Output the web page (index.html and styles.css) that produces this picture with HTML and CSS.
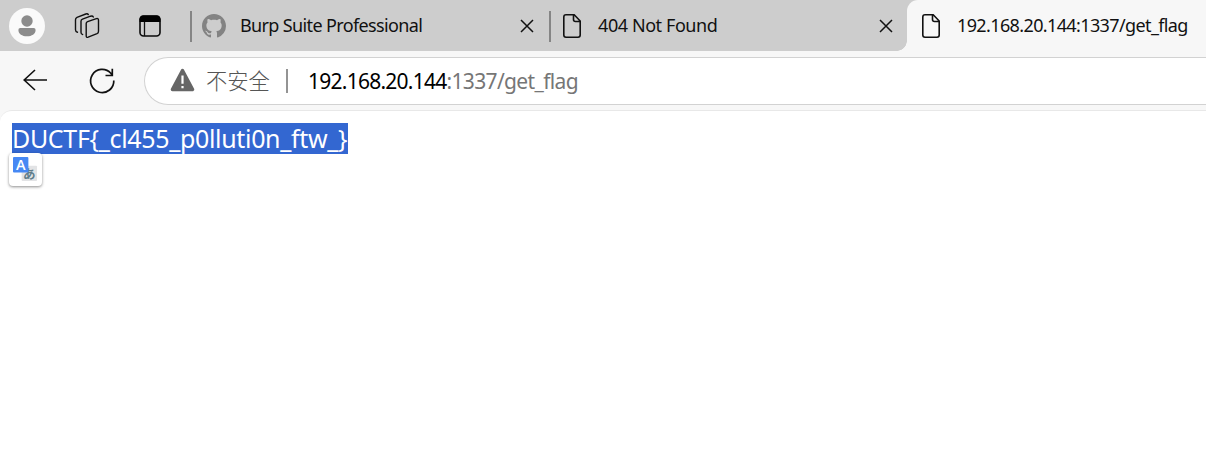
FILE: index.html
```html
<!DOCTYPE html>
<html lang="zh">
<head>
<meta charset="utf-8">
<title>192.168.20.144:1337/get_flag</title>
<link rel="stylesheet" href="styles.css">
</head>
<body>
<header class="tabstrip">
  <div class="tools">
    <svg class="avatar" viewBox="0 0 36 36"><circle cx="18" cy="18" r="18" fill="#fafafa"/><circle cx="18" cy="13" r="5.7" fill="#8c8c8c"/><path d="M11.3 20h13.4a1.9 1.9 0 0 1 1.9 1.9c0 4-3.8 6.3-8.6 6.3s-8.6-2.3-8.6-6.3A1.9 1.9 0 0 1 11.3 20z" fill="#8c8c8c"/></svg>
    <svg class="workspaces" viewBox="0 0 26 26" fill="none" stroke="#111" stroke-width="1.4" stroke-linecap="round" stroke-linejoin="round"><path d="M13.600 8.700L22.400 5.600Q24.500 5 24.500 7.200V18.200Q24.500 20 23 20.700L14.200 24.200Q12.200 24.900 12.200 22.800V10.600Q12.200 9.200 13.600 8.700z"/><path d="M8.600 21.500Q7 21.300 7 19.200V8.300Q7 6.700 8.500 6.100L16.500 3.200Q18.700 2.600 19.300 4"/><path d="M3.500 19.200Q1.500 18.700 1.500 16.700V6.700Q1.500 5 3 4.300L11.800 1Q13.700.4 14.300 1.600"/></svg>
    <svg class="vertical-tabs" viewBox="0 0 22 22"><rect x="1" y="1" width="20" height="20" rx="3.500" fill="none" stroke="#0a0a0a" stroke-width="1.600"/><path d="M.6 7V4.200Q.6.400 4.400.400h13.200q3.800 0 3.800 3.800V7z" fill="#000"/><path d="M5.500 7v14" stroke="#111" stroke-width="1.300"/></svg>
  </div>
  <div class="tab tab-first">
    <svg class="github" viewBox="0 0 16 16" fill="#838383"><path d="M8 0C3.580 0 0 3.580 0 8c0 3.540 2.290 6.530 5.470 7.590.4.070.55-.17.55-.38 0-.19-.010-.82-.010-1.490-2.010.37-2.530-.49-2.690-.94-.090-.23-.48-.94-.82-1.130-.28-.15-.68-.52-.010-.53.63-.010 1.080.58 1.230.82.72 1.210 1.870.87 2.330.66.070-.52.28-.87.51-1.070-1.780-.2-3.640-.89-3.640-3.950 0-.87.31-1.590.82-2.150-.080-.2-.36-1.020.080-2.120 0 0 .67-.21 2.200.82.64-.18 1.320-.27 2-.27s1.360.090 2 .27c1.530-1.040 2.200-.82 2.200-.82.44 1.100.16 1.920.080 2.120.51.56.82 1.270.82 2.150 0 3.070-1.870 3.750-3.650 3.950.29.25.54.73.54 1.480 0 1.070-.010 1.930-.010 2.200 0 .21.150.46.550.38A8.010 8.010 0 0 0 16 8c0-4.420-3.580-8-8-8z"/></svg>
    <span class="tab-title title-burp">Burp Suite Professional</span>
    <svg class="close" viewBox="0 0 14 14"><path d="M1 1l12 12M13 1L1 13"/></svg>
  </div>
  <div class="tab tab-second">
    <svg class="page-icon" viewBox="0 0 18 24"><path d="M3 .8h8.200L17.200 7v14q0 2.200-2.200 2.200H3Q.8 23.200.8 21V3Q.8.800 3 .8zM10.500.8V5.500q0 2 2 2h4.700"/></svg>
    <span class="tab-title title-missing">404 Not Found</span>
    <svg class="close" viewBox="0 0 14 14"><path d="M1 1l12 12M13 1L1 13"/></svg>
  </div>
  <div class="active-wrap">
    <div class="tab-active">
      <svg class="page-icon" viewBox="0 0 18 24"><path d="M3 .8h8.200L17.200 7v14q0 2.200-2.200 2.200H3Q.8 23.200.8 21V3Q.8.800 3 .8zM10.500.8V5.500q0 2 2 2h4.700"/></svg>
      <span class="tab-title title-flag">192.168.20.144:1337/get_flag</span>
    </div>
  </div>
</header>
<nav class="toolbar">
  <svg class="back" viewBox="0 0 25 22"><path d="M12 1L1.200 11 12 21M1.200 11H24"/></svg>
  <svg class="reload" viewBox="0 0 26 26"><path d="M24.800 12.500A11.600 11.600 0 1 1 21.800 5.200L23.200 7M23.300.8V7.500H16.500"/></svg>
  <div class="address">
    <svg class="warning" viewBox="0 0 25 24"><path d="M12.500 2.500L22.600 21.600H2.400z" fill="#666" stroke="#666" stroke-width="3.400" stroke-linejoin="round"/><path d="M12.500 7.500v8.300M12.500 18v2.200" stroke="#fff" stroke-width="2.200"/></svg>
    <span class="insecure">不安全</span>
    <span class="divider"></span>
    <span class="url"><span class="host">192.168.20.144</span><span class="path">:1337/get_flag</span></span>
  </div>
</nav>
<main class="content">
  <span class="flag">DUCTF{_cl455_p0lluti0n_ftw_}</span>
  <div class="translate">
    <svg viewBox="0 0 26 26"><rect x="9" y="9" width="16" height="16" rx="1" fill="#e2e3e5"/><text x="10.500" y="22.500" class="kana">あ</text><rect width="16" height="16" rx="1" fill="#4688f4"/><text x="8" y="13.300" class="latin">A</text></svg>
  </div>
</main>
</body>
</html>
```
FILE: styles.css
```css
* { box-sizing: border-box; }
body {
  margin: 0;
  height: 461px;
  overflow: hidden;
  background: #f7f7f7;
  font-family: "Noto Sans", "Open Sans", "Noto Sans CJK SC", sans-serif;
}
svg { display: block; flex: none; overflow: visible; }
.tabstrip { display: flex; height: 51px; background: #cdcdcd; }
.tools { display: flex; align-items: center; width: 190px; padding-left: 9px; }
.avatar { width: 36px; height: 36px; }
.workspaces { width: 26px; height: 26px; margin-left: 29px; }
.vertical-tabs { width: 22px; height: 22px; margin-left: 39px; }
.tab { display: flex; align-items: center; position: relative; }
.tab::before {
  content: "";
  position: absolute;
  left: 0;
  top: 11px;
  width: 2px;
  height: 31px;
  background: #858585;
}
.tab-first { width: 359px; padding: 0 15px 0 12px; }
.tab-second { width: 358px; padding: 0 14px 0 14px; }
.github { width: 24px; height: 24px; }
.page-icon { width: 18px; height: 24px; fill: none; stroke: #111; stroke-width: 1.600; }
.tab-title { padding-bottom: 2px; font-size: 18px; line-height: 24px; color: #111; white-space: nowrap; }
.title-burp { margin-left: 14px; letter-spacing: -0.63px; }
.title-missing { margin-left: 17px; letter-spacing: -0.42px; }
.title-flag { margin-left: 17px; letter-spacing: -0.62px; }
.close { width: 14px; height: 14px; margin-left: auto; fill: none; stroke: #111; stroke-width: 1.500; }
.active-wrap { flex: 1; background: linear-gradient(#cdcdcd 50%, #f7f7f7 50%); }
.tab-active {
  display: flex;
  align-items: center;
  height: 51px;
  padding-left: 15px;
  border-top-left-radius: 11px;
  background: #f7f7f7;
}
.tab-second::after {
  content: "";
  position: absolute;
  right: 0;
  bottom: 0;
  width: 10px;
  height: 10px;
  background: radial-gradient(circle at 0 0, #cdcdcd 9.500px, #f7f7f7 10px);
}
.toolbar { display: flex; align-items: center; height: 59px; background: #f7f7f7; }
.back { width: 25px; height: 22px; margin-left: 23px; margin-bottom: 1px; fill: none; stroke: #111; stroke-width: 1.600; }
.reload { width: 26px; height: 26px; margin-left: 41px; fill: none; stroke: #111; stroke-width: 1.700; }
.address {
  display: flex;
  align-items: center;
  flex: 1;
  height: 48px;
  margin-left: 29px;
  padding-left: 25px;
  border: 1.500px solid #d2d2d2;
  border-right: 0;
  border-radius: 24px 0 0 24px;
  background: #fff;
}
.warning { width: 25px; height: 24px; margin-bottom: 2px; }
.insecure { width: 64px; margin-left: 11px; padding-bottom: 1px; font: 300 21.300px/28px "Noto Sans CJK SC", sans-serif; color: #555; white-space: nowrap; }
.divider { width: 2px; height: 24px; margin-left: 16px; background: #949494; }
.url { margin-left: 20px; font-size: 21px; line-height: 28px; letter-spacing: -0.75px; white-space: nowrap; }
.host { color: #000; }
.path { color: #767676; letter-spacing: -0.65px; }
.content {
  height: 351px;
  padding: 12px 0 0 12px;
  border-top: 1px solid #e8e8e8;
  border-top-left-radius: 12px;
  background: #fff;
}
.flag {
  display: block;
  width: 336px;
  height: 31px;
  font-size: 25px;
  line-height: 31px;
  letter-spacing: -0.33px;
  white-space: nowrap;
  color: #fff;
  background: #3367d1;
}
.translate {
  position: relative;
  width: 33px;
  height: 33px;
  margin: -1px 0 0 -3px;
  padding: 4px;
  border-radius: 4px;
  background: #fff;
  box-shadow: 0 1px 3px rgba(0, 0, 0, 0.45);
}
.translate svg { width: 25px; height: 25px; }
.latin { font: 600 15px "Open Sans", sans-serif; fill: #fff; text-anchor: middle; }
.kana { font: 700 13px "Noto Sans CJK JP", sans-serif; fill: #607d8b; }
```
